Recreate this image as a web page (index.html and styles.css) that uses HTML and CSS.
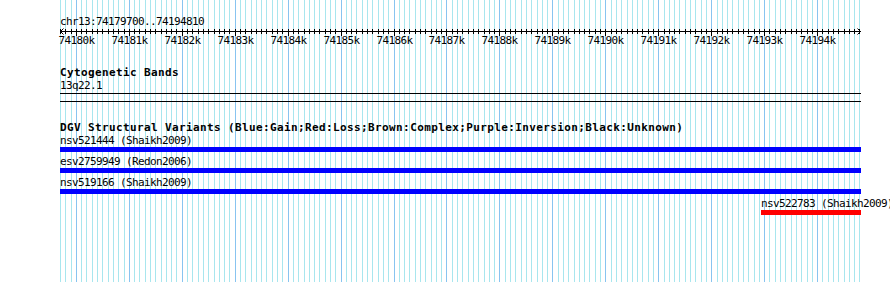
FILE: index.html
```html
<!DOCTYPE html>
<html>
<head>
<meta charset="UTF-8">
<title>chr13:74179700..74194810</title>
<link rel="stylesheet" href="styles.css">
</head>
<body>
    <div id="panel" class="panel">
        <svg id="grid" class="grid" width="890" height="282"></svg>
        <div id="ruler-track" class="track ruler-track">
            <div class="small">chr13:74179700..74194810</div>
            <div id="scale" class="scale"></div>
        </div>
        <div id="band-track" class="track band-track">
            <div class="bold title">Cytogenetic Bands</div>
            <div class="small">13q22.1</div>
            <div class="band"></div>
        </div>
        <div id="dgv-track" class="track dgv-track">
            <div class="bold">DGV Structural Variants (Blue:Gain;Red:Loss;Brown:Complex;Purple:Inversion;Black:Unknown)</div>
            <div class="feature">
                <div class="small">nsv521444 (Shaikh2009)</div>
                <div class="bar gain full"></div>
            </div>
            <div class="feature">
                <div class="small">esv2759949 (Redon2006)</div>
                <div class="bar gain full"></div>
            </div>
            <div class="feature">
                <div class="small">nsv519166 (Shaikh2009)</div>
                <div class="bar gain full"></div>
            </div>
            <div class="feature tail">
                <div class="small">nsv522783 (Shaikh2009)</div>
                <div class="bar loss short"></div>
            </div>
        </div>
    </div>
    <script src="script.js"></script>
</body>
</html>
```

FILE: styles.css
```css
* {
margin: 0;
padding: 0;
box-sizing: border-box;
}

html, body {
background-color: #ffffff;
color: #000000;
}

.panel {
position: relative;
width: 890px;
height: 282px;
overflow: hidden;
}

.grid {
position: absolute;
top: 0;
left: 0;
}

.grid line {
shape-rendering: crispEdges;
stroke-width: 1;
}

.grid .minor {
stroke: #a8e6ee;
}

.grid .major {
stroke: #88c4f0;
}

.track {
position: relative;
padding-left: 60px;
white-space: nowrap;
}

.small {
font-family: "DejaVu Sans Mono", monospace;
font-size: 11px;
letter-spacing: -0.62px;
line-height: 13px;
}

.bold {
font-family: "DejaVu Sans Mono", monospace;
font-weight: bold;
font-size: 11px;
letter-spacing: 0.38px;
line-height: 13px;
}

.ruler-track {
padding-top: 15px;
}

.scale {
position: relative;
width: 801px;
height: 21px;
}

.scale svg {
position: absolute;
top: 0;
left: 0;
}

.scale line, .scale polyline {
stroke: #000000;
stroke-width: 1;
fill: none;
shape-rendering: crispEdges;
}

.scale .arrow {
shape-rendering: auto;
}

.tick-label {
position: absolute;
top: 6px;
transform: translateX(-50%);
}

.band-track {
margin-top: 18px;
}

.band-track .title {
line-height: 12px;
}

.band {
width: 801px;
height: 9px;
margin-top: 1px;
border-top: 1px solid #000000;
border-bottom: 1px solid #000000;
}

.dgv-track {
margin-top: 19px;
}

.feature {
padding-bottom: 3px;
}

.bar {
height: 5px;
}

.gain {
background-color: #0000ff;
}

.loss {
background-color: #ff0000;
}

.full {
width: 801px;
}

.tail {
margin-left: 701px;
}

.short {
width: 100px;
}
```

FILE: script.js
```js
var start = 74179700;
var end = 74194810;
var width = 800;
var left = 60;
var bpp = (end - start) / width;
var NS = "http://www.w3.org/2000/svg";

function xOf(pos) {
    return Math.round((pos - start) / bpp);
}

function line(parent, x1, y1, x2, y2, cls) {
    var l = document.createElementNS(NS, "line");
    l.setAttribute("x1", x1);
    l.setAttribute("y1", y1);
    l.setAttribute("x2", x2);
    l.setAttribute("y2", y2);
    if (cls) l.setAttribute("class", cls);
    parent.appendChild(l);
}

// grid lines every 100bp, darker every 1kb
var grid = document.getElementById("grid");
for (var pos = Math.ceil(start / 100) * 100; pos <= end; pos += 100) {
    var gx = left + xOf(pos) + 0.5;
    line(grid, gx, 0, gx, 282, pos % 1000 === 0 ? "major" : "minor");
}

// ruler
var scale = document.getElementById("scale");
var svg = document.createElementNS(NS, "svg");
svg.setAttribute("width", "802");
svg.setAttribute("height", "21");
scale.appendChild(svg);

line(svg, 0, 3.5, 801, 3.5);

var la = document.createElementNS(NS, "polyline");
la.setAttribute("points", "3.5,0.5 0.5,3.5 3.5,6.5");
la.setAttribute("class", "arrow");
svg.appendChild(la);
var ra = document.createElementNS(NS, "polyline");
ra.setAttribute("points", "797.5,0.5 800.5,3.5 797.5,6.5");
ra.setAttribute("class", "arrow");
svg.appendChild(ra);

for (var p = Math.ceil(start / 100) * 100; p <= end; p += 100) {
    var tx = xOf(p) + 0.5;
    if (p % 1000 === 0) {
        line(svg, tx, 1, tx, 8);
        var lab = document.createElement("div");
        lab.className = "small tick-label";
        lab.textContent = (p / 1000) + "k";
        lab.style.left = (xOf(p) + 0.5) + "px";
        scale.appendChild(lab);
    } else {
        line(svg, tx, 1, tx, 6);
    }
}
```
